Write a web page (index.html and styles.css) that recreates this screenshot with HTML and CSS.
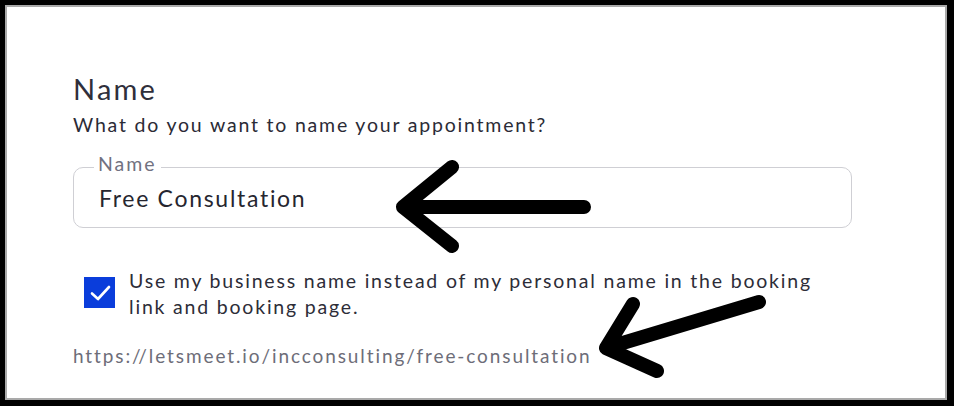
FILE: index.html
```html
<!DOCTYPE html>
<html lang="en">
<head>
<meta charset="utf-8">
<title>Name</title>
<link rel="stylesheet" href="styles.css">
</head>
<body>
<div class="frame">
  <div class="card">
    <h1 class="title">Name</h1>
    <p class="subtitle">What do you want to name your appointment?</p>
    <fieldset class="field">
      <legend class="field-label">Name</legend>
      <div class="field-value">Free Consultation</div>
    </fieldset>
    <label class="check-row">
      <span class="checkbox">
        <svg width="31" height="31" viewBox="0 0 31 31"><path d="M8 16.5 L14 22 L25 10" fill="none" stroke="#fff" stroke-width="2.6" stroke-linecap="round" stroke-linejoin="round"/></svg>
      </span>
      <span class="check-text">Use my business name instead of my personal name in the booking link and booking page.</span>
    </label>
    <div class="url">https://letsmeet.io/incconsulting/free-consultation</div>
  </div>
</div>
<svg class="annotations" width="954" height="406" viewBox="0 0 954 406">
  <g fill="none" stroke="#000" stroke-width="14" stroke-linecap="round" stroke-linejoin="round">
    <path d="M452 167 L403 207 L452 246 M403 207 L584 207"/>
    <path d="M633 304 L606 348 L657 371 M606 348 L759 302"/>
  </g>
</svg>
</body>
</html>
```
FILE: styles.css
```css
html, body {
  margin: 0;
  padding: 0;
}
body {
  background: #000;
  width: 954px;
  height: 406px;
  overflow: hidden;
  position: relative;
  font-family: Lato, "Liberation Sans", sans-serif;
}
.frame {
  box-sizing: border-box;
  width: 954px;
  height: 406px;
  padding: 5px 7px 6px 5px;
  display: flex;
}
.card {
  flex: 1;
  background: #fff;
  border: 2px solid #a9a9a9;
  padding: 66px 0 0 66px;
}
.title {
  margin: 0;
  font-size: 29px;
  line-height: 32px;
  font-weight: 400;
  color: #2f2f3b;
  letter-spacing: 2.2px;
}
.subtitle {
  margin: 8px 0 0;
  font-size: 19.5px;
  line-height: 24px;
  color: #2b2b36;
  letter-spacing: 1.8px;
}
.field {
  margin: 17px 0 0;
  width: 779px;
  box-sizing: border-box;
  height: 74px;
  border: 1px solid #cfcfd4;
  border-radius: 10px;
  padding: 3px 0 0 25px;
}
.field-label {
  margin-left: -5px;
  padding: 0 4px 7px;
  font-size: 19.5px;
  line-height: 20px;
  color: #717180;
  letter-spacing: 2px;
}
.field-value {
  font-size: 23px;
  line-height: 28px;
  color: #26262f;
  letter-spacing: 1.7px;
}
.check-row {
  display: flex;
  align-items: flex-start;
  gap: 14px;
  margin: 40px 0 0 11px;
  width: 750px;
}
.checkbox {
  flex: none;
  width: 31px;
  height: 31px;
  margin-top: 9px;
  background: #0a3ddb;
  display: block;
}
.checkbox svg {
  display: block;
}
.check-text {
  font-size: 19.5px;
  line-height: 26px;
  color: #2d2d38;
  letter-spacing: 1.8px;
}
.url {
  margin-top: 24px;
  font-size: 19px;
  line-height: 24px;
  color: #6d6d78;
  letter-spacing: 1.9px;
}
.annotations {
  position: absolute;
  top: 0;
  left: 0;
  pointer-events: none;
}
```
